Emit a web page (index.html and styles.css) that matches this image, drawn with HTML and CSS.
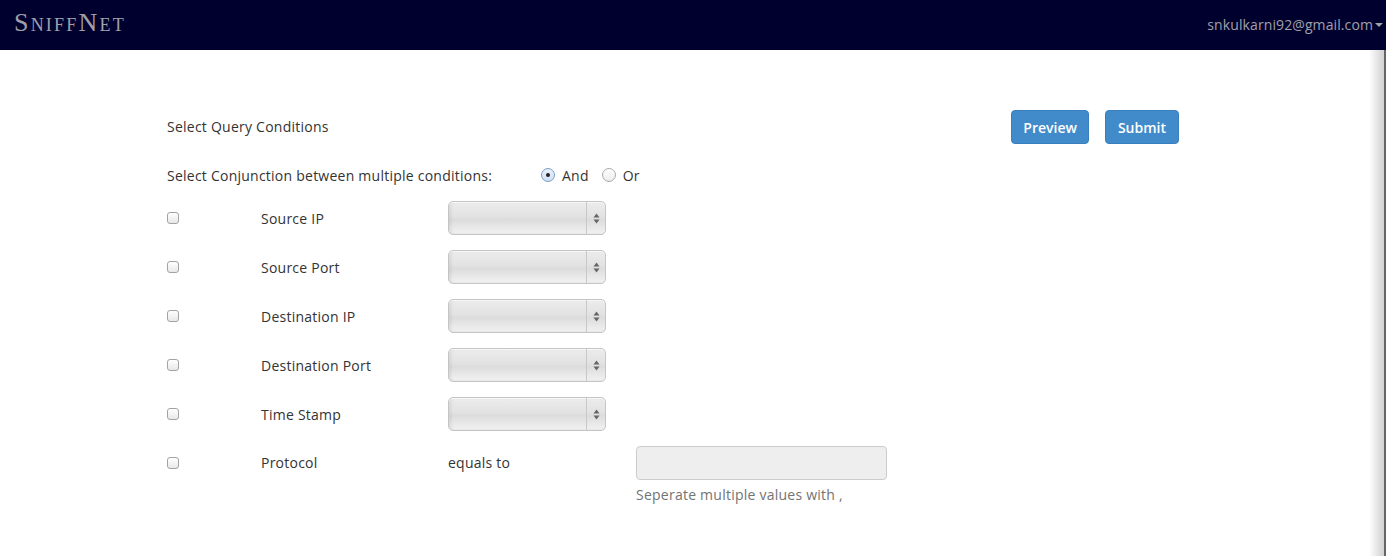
FILE: index.html
```html
<!DOCTYPE html>
<html>
<head>
<meta charset="utf-8">
<title>SniffNet</title>
<link rel="stylesheet" href="styles.css">
</head>
<body>
<nav class="navbar">
  <a class="brand">SniffNet</a>
  <a class="user">snkulkarni92@gmail.com<span class="caret"></span></a>
</nav>
<div class="edge"></div>
<main class="content">
  <div class="head-row">
    <span class="title">Select Query Conditions</span>
    <div class="actions">
      <button class="btn">Preview</button>
      <button class="btn">Submit</button>
    </div>
  </div>
  <div class="conj-row">
    <span class="conj-label">Select Conjunction between multiple conditions:</span>
    <label class="radio"><span class="radio-box checked"></span>And</label>
    <label class="radio"><span class="radio-box"></span>Or</label>
  </div>
  <div class="cond-grid">
    <div class="cond-row"><span class="check"></span><span class="label">Source IP</span><div class="select"><span class="sep"></span><svg class="arrows" width="7" height="11" viewBox="0 0 7 11"><path d="M3.5 0.5 L6.5 4.5 L0.5 4.5 Z M0.5 6.5 L6.5 6.5 L3.5 10.5 Z" fill="#666"/></svg></div></div>
    <div class="cond-row"><span class="check"></span><span class="label">Source Port</span><div class="select"><span class="sep"></span><svg class="arrows" width="7" height="11" viewBox="0 0 7 11"><path d="M3.5 0.5 L6.5 4.5 L0.5 4.5 Z M0.5 6.5 L6.5 6.5 L3.5 10.5 Z" fill="#666"/></svg></div></div>
    <div class="cond-row"><span class="check"></span><span class="label">Destination IP</span><div class="select"><span class="sep"></span><svg class="arrows" width="7" height="11" viewBox="0 0 7 11"><path d="M3.5 0.5 L6.5 4.5 L0.5 4.5 Z M0.5 6.5 L6.5 6.5 L3.5 10.5 Z" fill="#666"/></svg></div></div>
    <div class="cond-row"><span class="check"></span><span class="label">Destination Port</span><div class="select"><span class="sep"></span><svg class="arrows" width="7" height="11" viewBox="0 0 7 11"><path d="M3.5 0.5 L6.5 4.5 L0.5 4.5 Z M0.5 6.5 L6.5 6.5 L3.5 10.5 Z" fill="#666"/></svg></div></div>
    <div class="cond-row"><span class="check"></span><span class="label">Time Stamp</span><div class="select"><span class="sep"></span><svg class="arrows" width="7" height="11" viewBox="0 0 7 11"><path d="M3.5 0.5 L6.5 4.5 L0.5 4.5 Z M0.5 6.5 L6.5 6.5 L3.5 10.5 Z" fill="#666"/></svg></div></div>
    <div class="cond-row proto"><span class="check"></span><span class="label">Protocol</span><span class="label">equals to</span>
      <div class="field">
        <div class="input"></div>
        <div class="help">Seperate multiple values with ,</div>
      </div>
    </div>
  </div>
</main>
</body>
</html>
```
FILE: styles.css
```css
* { box-sizing: border-box; }
html, body { margin: 0; padding: 0; background: #fff; }
body {
  font-family: "Open Sans", "DejaVu Sans", sans-serif;
  font-size: 14px;
  letter-spacing: 0.24px;
  color: #333;
  width: 1386px;
  height: 556px;
  overflow: hidden;
}
.navbar {
  height: 50px;
  background: #00002f;
  display: flex;
  align-items: center;
  justify-content: space-between;
  padding: 0 3px 0 14px;
}
.brand {
  font-family: "Liberation Serif", "Times New Roman", serif;
  font-variant: small-caps;
  font-size: 26px;
  color: #a0a0a8;
  letter-spacing: 2.2px;
  margin-top: -4px;
}
.user {
  color: #a0a0a8;
  font-size: 14px;
  letter-spacing: 0.1px;
  display: flex;
  align-items: center;
  margin-top: -2px;
}
.caret {
  display: inline-block;
  width: 0; height: 0;
  border-left: 4px solid transparent;
  border-right: 4px solid transparent;
  border-top: 4px solid #a0a0a8;
  margin-left: 2px;
  margin-top: 2px;
}
.edge {
  position: fixed;
  top: 50px;
  right: 0;
  bottom: 0;
  width: 17px;
  background: linear-gradient(to right, rgba(255,255,255,0), #d4d4d4 92%);
  border-right: 2px solid #666;
}
.content {
  margin-left: 167px;
  width: 1012px;
  padding-top: 59px;
}
.head-row {
  display: flex;
  justify-content: space-between;
  align-items: center;
  height: 34px;
  margin-top: 1px;
}
.title { margin-top: -2px; }
.actions { display: flex; gap: 16px; }
.btn {
  font-family: "Open Sans", sans-serif;
  font-size: 14px;
  font-weight: 600;
  letter-spacing: 0;
  color: #fff;
  background: #428bca;
  border: 1px solid #3a7fbd;
  border-radius: 4px;
  height: 34px;
  padding: 0 11px;
}
.btn + .btn { padding: 0 12px; }
.conj-row {
  display: flex;
  align-items: center;
  height: 34px;
  margin-top: 14px;
}
.conj-label { width: 374px; }
.radio { display: flex; align-items: center; margin-right: 13px; }
.radio-box {
  width: 14px; height: 14px;
  border-radius: 50%;
  border: 1px solid #aaa;
  background: linear-gradient(#fff, #ececec);
  margin-right: 7px;
  position: relative;
}
.radio-box.checked {
  border-color: #7a9cc4;
  background: linear-gradient(#eaf2fc, #cfe0f5);
}
.radio-box.checked::after {
  content: "";
  position: absolute;
  left: 4px; top: 4px;
  width: 4px; height: 4px;
  border-radius: 50%;
  background: #222;
}
.cond-grid { margin-top: 9px; }
.cond-row {
  display: grid;
  grid-template-columns: 94px 187px 188px 1fr;
  align-items: center;
  height: 34px;
  margin-bottom: 15px;
}
.check {
  width: 12px; height: 12px;
  border: 1px solid #a3a3a3;
  border-radius: 3px;
  background: linear-gradient(#fff, #e8e8e8);
}
.select {
  width: 158px;
  height: 34px;
  border: 1px solid #c4c4c4;
  border-radius: 5px;
  background: linear-gradient(#ececec 0%, #e2e2e2 45%, #dcdcdc 55%, #f2f2f2 100%);
  box-shadow: inset 0 1px 1px rgba(255,255,255,.8), inset 2px 0 3px rgba(0,0,0,.08);
  display: flex;
  justify-content: flex-end;
  align-items: center;
}
.sep {
  width: 1px;
  align-self: stretch;
  background: #c8c8c8;
  margin-right: 6px;
}
.arrows { margin-right: 5px; }
.proto { height: auto; align-items: start; }
.proto .check { margin-top: 11px; }
.proto .label { line-height: 34px; }
.input {
  width: 251px;
  height: 34px;
  background: #eee;
  border: 1px solid #ccc;
  border-radius: 4px;
}
.help {
  color: #737373;
  margin-top: 5px;
  line-height: 20px;
}
```
